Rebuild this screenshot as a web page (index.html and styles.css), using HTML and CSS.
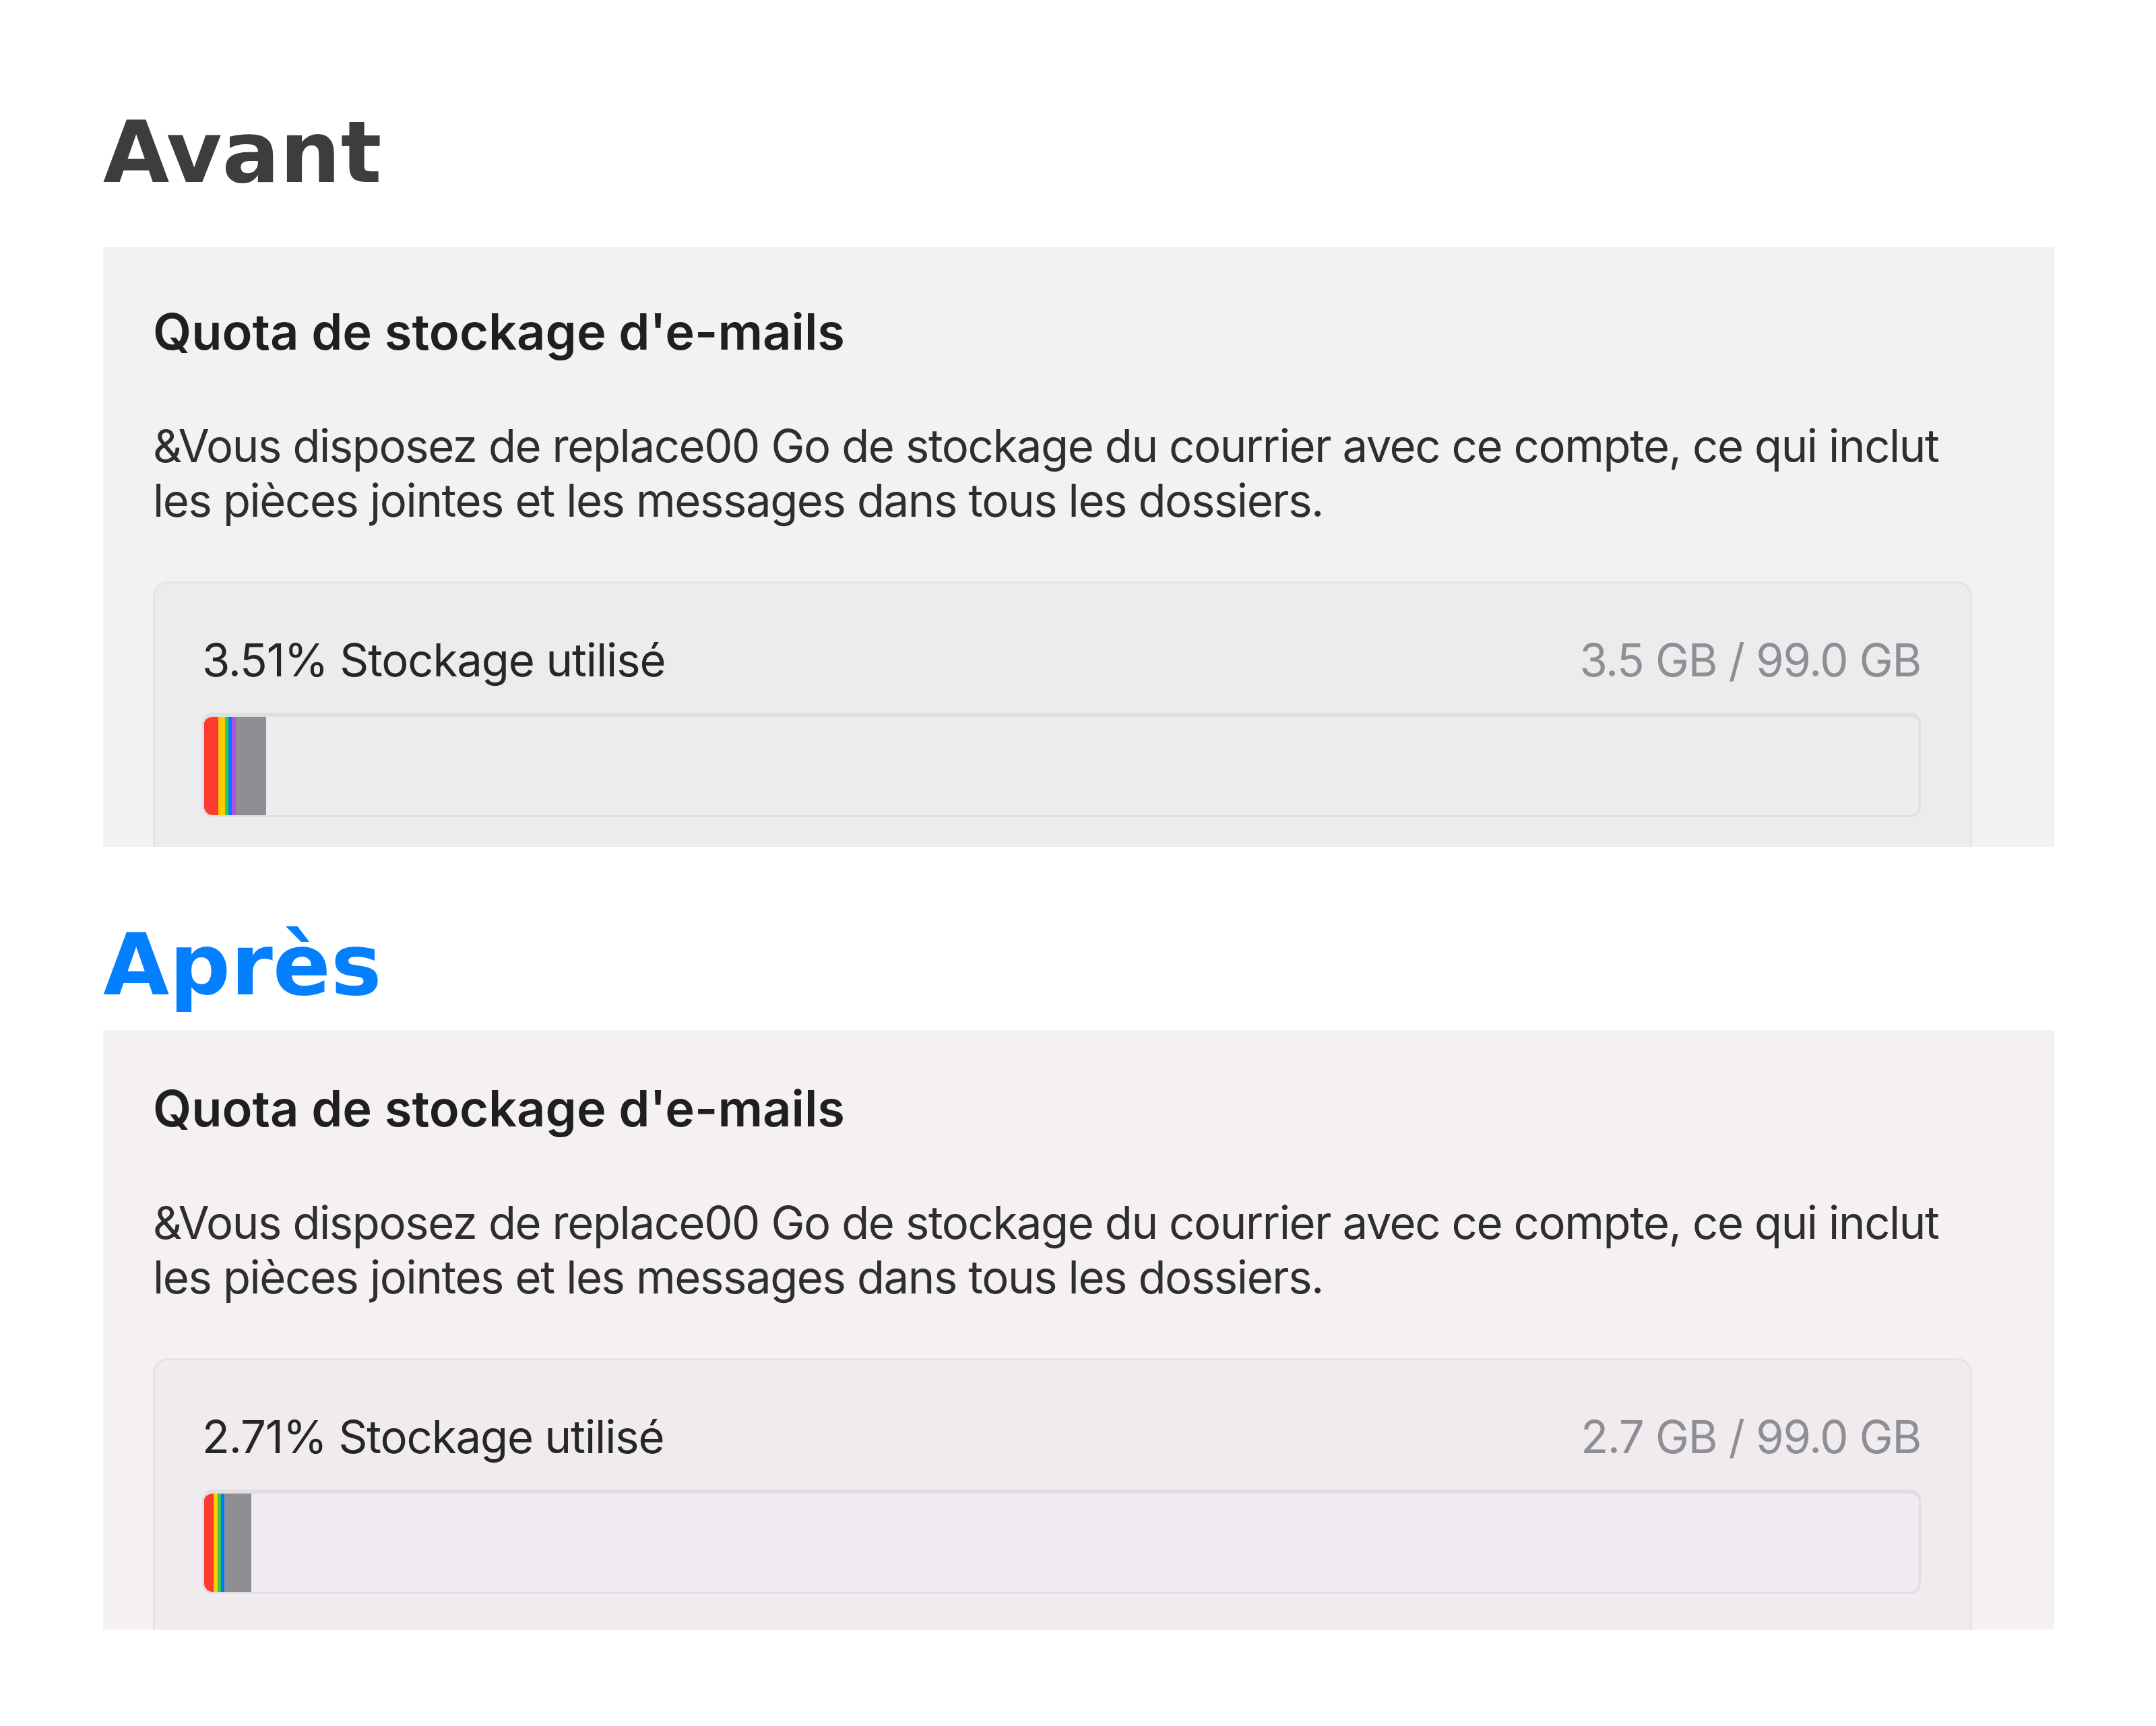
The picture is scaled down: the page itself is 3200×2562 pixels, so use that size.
FILE: index.html
```html
<!DOCTYPE html>
<html lang="fr">
<head>
    <meta charset="UTF-8">
    <meta name="viewport" content="width=device-width, initial-scale=1.0">
    <title>Quota de stockage</title>
    <link rel="stylesheet" href="styles.css">
</head>
<body>

<div class="page">

    <h2 class="label label-before">Avant</h2>
    <div class="panel panel-before">
        <h3 class="panel-title">Quota de stockage d'e-mails</h3>
        <p class="panel-text">&amp;Vous disposez de replace00 Go de stockage du courrier avec ce compte, ce qui inclut<br>les pièces jointes et les messages dans tous les dossiers.</p>
        <div class="usage-card">
            <div class="usage-row">
                <span class="usage-percent">3.51% Stockage utilisé</span>
                <span class="usage-amount">3.5 GB / 99.0 GB</span>
            </div>
            <div class="usage-bar">
                <div class="usage-fill">
                    <span class="seg red" style="width: 21px"></span>
                    <span class="seg yellow" style="width: 10px"></span>
                    <span class="seg green" style="width: 5px"></span>
                    <span class="seg blue" style="width: 5px"></span>
                    <span class="seg purple" style="width: 6px"></span>
                    <span class="seg gray" style="width: 45px"></span>
                </div>
            </div>
        </div>
    </div>

    <h2 class="label label-after">Après</h2>
    <div class="panel panel-after">
        <h3 class="panel-title">Quota de stockage d'e-mails</h3>
        <p class="panel-text">&amp;Vous disposez de replace00 Go de stockage du courrier avec ce compte, ce qui inclut<br>les pièces jointes et les messages dans tous les dossiers.</p>
        <div class="usage-card">
            <div class="usage-row">
                <span class="usage-percent">2.71% Stockage utilisé</span>
                <span class="usage-amount">2.7 GB / 99.0 GB</span>
            </div>
            <div class="usage-bar">
                <div class="usage-fill">
                    <span class="seg red" style="width: 14px"></span>
                    <span class="seg yellow" style="width: 6px"></span>
                    <span class="seg green" style="width: 5px"></span>
                    <span class="seg blue" style="width: 5px"></span>
                    <span class="seg gray" style="width: 40px"></span>
                </div>
            </div>
        </div>
    </div>

</div>

</body>
</html>
```

FILE: styles.css
```css
body {
    margin: 0px;
    background: #ffffff;
    font-family: Inter, "Liberation Sans", sans-serif;
}

.page {
    width: 2896px;
    padding-left: 153px;
}

.label {
    margin: 0;
    font-family: "DejaVu Sans", sans-serif;
    font-weight: bold;
    font-size: 127px;
    line-height: 127px;
}

.label-before {
    color: #3d3d3d;
    padding-top: 163px;
    margin-bottom: 77px;
}

.label-after {
    color: #0480fe;
    margin-top: 112px;
    margin-bottom: 33px;
}

.panel {
    height: 890px;
    overflow: hidden;
    box-sizing: border-box;
    padding: 81px 122px 0 74px;
    background: #f2f2f2;
}

.panel-after {
    padding-top: 72px;
    background: #f4f0f4;
}

.panel-title {
    margin: 0;
    font-size: 74px;
    line-height: 88px;
    font-weight: 600;
    color: #1f1f1f;
}

.panel-text {
    margin: 85px 0 80px 0;
    font-size: 67px;
    line-height: 81px;
    letter-spacing: -1.4px;
    white-space: nowrap;
    color: #2e2e2e;
}

.usage-card {
    height: 600px;
    border: 3px solid #e4e3e5;
    border-radius: 22px;
    background: #ecebed;
    padding: 73px 73px 0 70px;
}

.panel-after .usage-card {
    background: #efebef;
    border-color: #e6e2e6;
}

.usage-row {
    display: flex;
    justify-content: space-between;
    font-size: 67px;
    line-height: 81px;
    white-space: nowrap;
}

.usage-percent {
    color: #262626;
    letter-spacing: -1.1px;
}

.usage-amount {
    color: #8e8e93;
    letter-spacing: -1.3px;
}

.usage-bar {
    margin-top: 38px;
    height: 146px;
    border: 3px solid #dfdee0;
    border-top-width: 6px;
    border-radius: 16px;
    background: #edecee;
    overflow: hidden;
}

.panel-after .usage-bar {
    background: #f0ebf0;
    border-color: #e1dde1;
}

.usage-fill {
    display: flex;
    height: 100%;
}

.seg {
    display: block;
    height: 100%;
}

.red { background: #ff3b30; }
.yellow { background: #ffcc00; }
.green { background: #34c759; }
.blue { background: #007aff; }
.purple { background: #af52de; }
.gray { background: #8e8e93; }
```
